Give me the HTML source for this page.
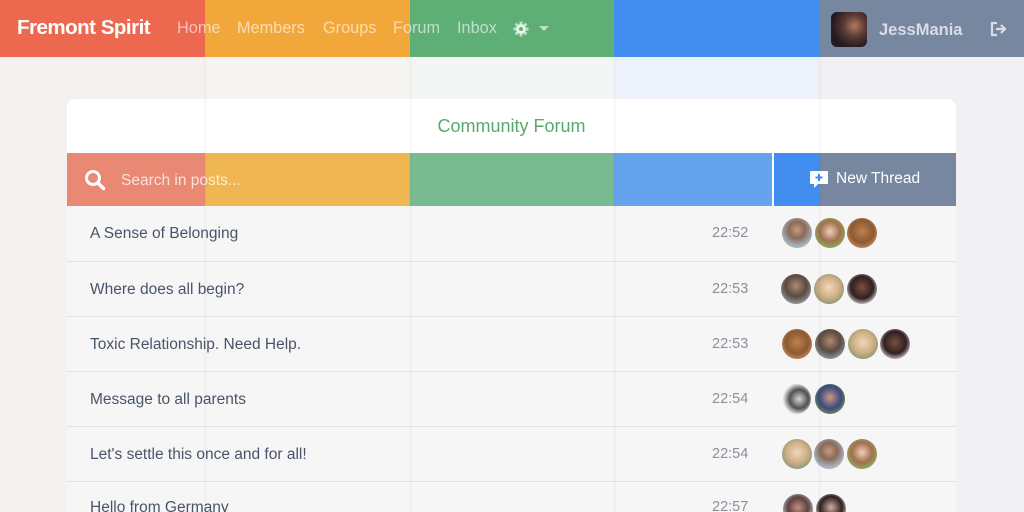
<!DOCTYPE html>
<html><head><meta charset="utf-8"><style>
*{margin:0;padding:0;box-sizing:border-box}
html,body{width:1024px;height:512px;overflow:hidden}
body{position:relative;font-family:"Liberation Sans",sans-serif;background:#f3f3f3}
.abs{position:absolute}
.nav a{position:absolute;top:19px;font-size:16.3px;color:rgba(255,255,255,.6);text-decoration:none}
.row{position:absolute;left:67px;width:889px;height:55px;background:#f6f6f6;border-top:1px solid #e2e2e2}
.row .t{position:absolute;left:23px;top:19px;font-size:15.5px;color:#4a5468}
.row .tm{position:absolute;left:645px;top:19px;font-size:14.5px;color:#8a909c}
.av{position:absolute;top:12px;width:30px;height:30px;border-radius:50%}
.line{position:absolute;top:57px;width:3px;height:455px;background:rgba(0,0,0,.02);z-index:5}
</style></head><body>
<div class="abs" style="left:0;top:0;width:205px;height:512px;background:#f5f1f0"></div>
<div class="abs" style="left:205px;top:0;width:205px;height:512px;background:#f6f5f1"></div>
<div class="abs" style="left:410px;top:0;width:204px;height:512px;background:#f3f6f4"></div>
<div class="abs" style="left:614px;top:0;width:205px;height:512px;background:#eef2fa"></div>
<div class="abs" style="left:819px;top:0;width:205px;height:512px;background:#f0f0f5"></div>
<div class="abs" style="left:0;top:0;width:205px;height:57px;background:#ec6950"></div>
<div class="abs" style="left:205px;top:0;width:205px;height:57px;background:#f2a73b"></div>
<div class="abs" style="left:410px;top:0;width:204px;height:57px;background:#5daf75"></div>
<div class="abs" style="left:614px;top:0;width:205px;height:57px;background:#418ef0"></div>
<div class="abs" style="left:819px;top:0;width:205px;height:57px;background:#7787a0"></div>
<div class="nav">
<div class="abs" style="left:17px;top:16px;font-size:20.5px;font-weight:bold;color:#fff;letter-spacing:-.5px">Fremont Spirit</div>
<a style="left:177px">Home</a><a style="left:237px">Members</a><a style="left:323px">Groups</a><a style="left:393px">Forum</a><a style="left:457px">Inbox</a>
<svg class="abs" style="left:513px;top:21px" width="16" height="16" viewBox="0 0 16 16"><g fill="rgba(255,255,255,.6)"><circle cx="8" cy="8" r="5"/><rect x="6.5" y="0.5" width="3" height="15"/><rect x="0.5" y="6.5" width="15" height="3"/><rect x="6.5" y="0.5" width="3" height="15" transform="rotate(45 8 8)"/><rect x="6.5" y="0.5" width="3" height="15" transform="rotate(-45 8 8)"/></g><circle cx="8" cy="8" r="2" fill="#5daf75"/></svg>
<div class="abs" style="left:539px;top:26px;border-left:5px solid transparent;border-right:5px solid transparent;border-top:5px solid rgba(255,255,255,.6)"></div>
<div class="abs" style="left:831px;top:12px;width:36px;height:35px;border-radius:6px;background:radial-gradient(circle at 65% 40%,#b07a60 0,#5a3a34 35%,#241a22 70%)"></div>
<div class="abs" style="left:879px;top:21px;font-size:16.5px;font-weight:bold;color:#d8dde8">JessMania</div>
<svg class="abs" style="left:990px;top:21px" width="18" height="16" viewBox="0 0 18 16"><path d="M7 2H2v12h5" fill="none" stroke="#d8dde8" stroke-width="2.2"/><path d="M6 8h8M11 4l4 4-4 4" fill="none" stroke="#d8dde8" stroke-width="2.2"/></svg>
</div>
<div class="abs" style="left:67px;top:99px;width:889px;height:413px;background:#fff;border-radius:8px 8px 0 0;overflow:hidden">
<div class="abs" style="left:0;width:889px;top:17px;text-align:center;font-size:18px;color:#5aa86e">Community Forum</div>
</div>
<div class="abs" style="left:67px;top:153px;width:138px;height:53px;background:#e98873"></div>
<div class="abs" style="left:205px;top:153px;width:205px;height:53px;background:#efb652"></div>
<div class="abs" style="left:410px;top:153px;width:204px;height:53px;background:#7aba90"></div>
<div class="abs" style="left:614px;top:153px;width:158px;height:53px;background:#66a3ee"></div>
<div class="abs" style="left:774px;top:153px;width:45px;height:53px;background:#418ef0"></div>
<div class="abs" style="left:819px;top:153px;width:137px;height:53px;background:#7787a0"></div>
<svg class="abs" style="left:84px;top:169px" width="22" height="22" viewBox="0 0 22 22"><circle cx="9" cy="9" r="6.5" fill="none" stroke="#fff" stroke-width="3"/><path d="M14 14l5.5 5.5" stroke="#fff" stroke-width="3.5" stroke-linecap="round"/></svg>
<div class="abs" style="left:121px;top:172px;font-size:15.5px;color:rgba(255,255,255,.75)">Search in posts...</div>
<svg class="abs" style="left:809px;top:170px" width="20" height="20" viewBox="0 0 20 20"><path d="M2 1h16a1 1 0 0 1 1 1v11a1 1 0 0 1-1 1H9l-4 4v-4H2a1 1 0 0 1-1-1V2a1 1 0 0 1 1-1z" fill="#fff"/><path d="M10 4v7M6.5 7.5h7" stroke="#418ef0" stroke-width="2"/></svg>
<div class="abs" style="left:836px;top:170px;font-size:15.5px;color:#fff">New Thread</div>
<div class="row" style="top:206px;border-top:none"><div class="t">A Sense of Belonging</div><div class="tm">22:52</div>
<div class="av" style="left:715px;background:radial-gradient(circle at 50% 40%,#c89a80 0,#8a6a58 35%,#a8b4c0 70%)"></div><div class="av" style="left:748px;background:radial-gradient(circle at 50% 45%,#f0d0b8 0,#a07050 45%,#90a860 75%)"></div><div class="av" style="left:780px;background:radial-gradient(circle at 50% 45%,#c08050 0,#8a5a30 50%,#d08a60 80%)"></div></div>
<div class="row" style="top:261px"><div class="t">Where does all begin?</div><div class="tm">22:53</div>
<div class="av" style="left:714px;background:radial-gradient(circle at 50% 40%,#b08a70 0,#5a4a40 45%,#8a9098 75%)"></div><div class="av" style="left:747px;background:radial-gradient(circle at 50% 45%,#f0d8b8 0,#d0b088 45%,#909878 75%)"></div><div class="av" style="left:780px;background:radial-gradient(circle at 50% 45%,#7a5040 0,#302020 50%,#f6f6f6 85%)"></div></div>
<div class="row" style="top:316px"><div class="t">Toxic Relationship. Need Help.</div><div class="tm">22:53</div>
<div class="av" style="left:715px;background:radial-gradient(circle at 50% 45%,#c08050 0,#8a5a30 50%,#d08a60 80%)"></div><div class="av" style="left:748px;background:radial-gradient(circle at 50% 40%,#b08a70 0,#5a4a40 45%,#8a9098 75%)"></div><div class="av" style="left:781px;background:radial-gradient(circle at 50% 45%,#f0d8b8 0,#d0b088 45%,#909878 75%)"></div><div class="av" style="left:813px;background:radial-gradient(circle at 50% 45%,#7a5040 0,#302020 50%,#f6f6f6 85%)"></div></div>
<div class="row" style="top:371px"><div class="t">Message to all parents</div><div class="tm">22:54</div>
<div class="av" style="left:714px;background:radial-gradient(circle at 60% 50%,#d8d8d8 0,#505050 40%,#f6f6f6 70%)"></div><div class="av" style="left:748px;background:radial-gradient(circle at 50% 45%,#c89a80 0,#3a4a80 50%,#6a8a50 75%)"></div></div>
<div class="row" style="top:426px"><div class="t">Let's settle this once and for all!</div><div class="tm">22:54</div>
<div class="av" style="left:715px;background:radial-gradient(circle at 50% 45%,#f0d8b8 0,#d0b088 45%,#909878 75%)"></div><div class="av" style="left:747px;background:radial-gradient(circle at 50% 40%,#c89a80 0,#8a6a58 35%,#a8b4c0 70%)"></div><div class="av" style="left:780px;background:radial-gradient(circle at 50% 45%,#f0d0b8 0,#a07050 45%,#90a860 75%)"></div></div>
<div class="row" style="top:481px;height:31px"><div class="t" style="top:17px">Hello from Germany</div><div class="tm" style="top:17px">22:57</div>
<div class="av" style="left:716px;background:radial-gradient(circle at 50% 45%,#c09080 0,#604040 45%,#b0b0b0 75%)"></div><div class="av" style="left:749px;background:radial-gradient(circle at 50% 45%,#d0b0a0 0,#302020 50%,#f6f6f6 85%)"></div></div>
<div class="line" style="left:204px"></div><div class="line" style="left:409px"></div><div class="line" style="left:613px"></div><div class="line" style="left:818px"></div>
</body></html>
